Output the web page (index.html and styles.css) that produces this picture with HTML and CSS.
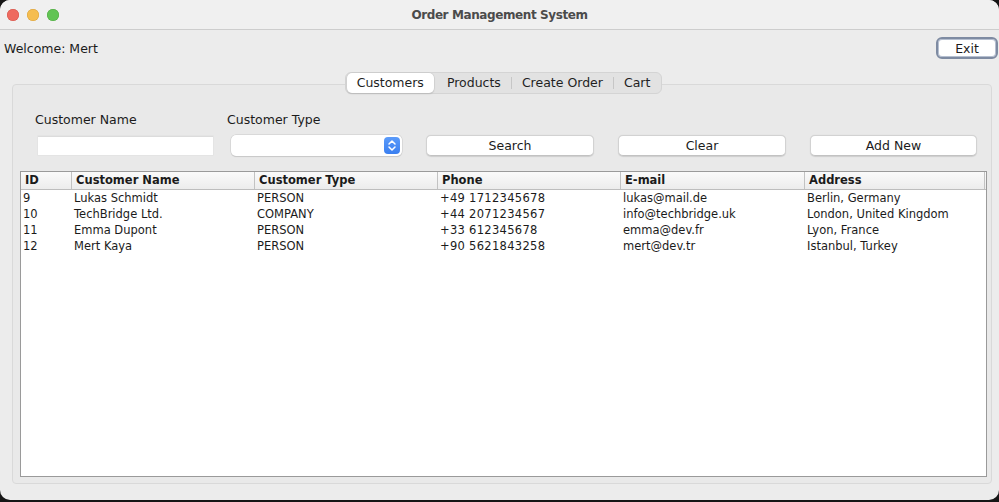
FILE: index.html
```html
<!DOCTYPE html>
<html>
<head>
<meta charset="utf-8">
<link rel="stylesheet" href="styles.css">
</head>
<body>
<div class="window">
  <div class="titlebar">
    <div class="lights">
      <span class="light red"></span>
      <span class="light yellow"></span>
      <span class="light green"></span>
    </div>
    <div class="title">Order Management System</div>
  </div>
  <div class="content">
    <div class="toprow">
      <span class="welcome">Welcome: Mert</span>
      <button class="btn exit">Exit</button>
    </div>
    <div class="tabs">
      <div class="seg">
        <span class="tab active">Customers</span>
        <span class="tab">Products</span>
        <span class="sep"></span>
        <span class="tab">Create Order</span>
        <span class="sep"></span>
        <span class="tab">Cart</span>
      </div>
    </div>
    <div class="panel">
      <div class="labels">
        <span class="lbl lbl-name">Customer Name</span>
        <span class="lbl">Customer Type</span>
      </div>
      <div class="controls">
        <div class="field"></div>
        <div class="combo">
          <span class="stepper">
            <svg width="16" height="17" viewBox="0 0 16 17"><path d="M5 7 L8 4 L11 7" fill="none" stroke="#fff" stroke-width="1.5" stroke-linecap="round" stroke-linejoin="round"/><path d="M5 10 L8 13 L11 10" fill="none" stroke="#fff" stroke-width="1.5" stroke-linecap="round" stroke-linejoin="round"/></svg>
          </span>
        </div>
        <button class="btn act b-search">Search</button>
        <button class="btn act b-clear">Clear</button>
        <button class="btn act b-add">Add New</button>
      </div>
      <div class="table">
        <div class="thead">
          <div class="th">ID</div>
          <div class="th">Customer Name</div>
          <div class="th">Customer Type</div>
          <div class="th">Phone</div>
          <div class="th">E-mail</div>
          <div class="th">Address</div>
        </div>
        <div class="tr">
          <div class="td">9</div><div class="td">Lukas Schmidt</div><div class="td">PERSON</div><div class="td num">+49 1712345678</div><div class="td">lukas@mail.de</div><div class="td">Berlin, Germany</div>
        </div>
        <div class="tr">
          <div class="td">10</div><div class="td">TechBridge Ltd.</div><div class="td">COMPANY</div><div class="td num">+44 2071234567</div><div class="td">info@techbridge.uk</div><div class="td">London, United Kingdom</div>
        </div>
        <div class="tr">
          <div class="td">11</div><div class="td">Emma Dupont</div><div class="td">PERSON</div><div class="td num">+33 612345678</div><div class="td">emma@dev.fr</div><div class="td">Lyon, France</div>
        </div>
        <div class="tr">
          <div class="td">12</div><div class="td">Mert Kaya</div><div class="td">PERSON</div><div class="td num">+90 5621843258</div><div class="td">mert@dev.tr</div><div class="td">Istanbul, Turkey</div>
        </div>
      </div>
    </div>
  </div>
</div>
</body>
</html>
```
FILE: styles.css
```css
* { box-sizing: border-box; }
html, body { margin: 0; padding: 0; }
body {
  background: #151515;
  width: 999px;
  height: 502px;
  overflow: hidden;
  font-family: "DejaVu Sans", "Noto Sans", sans-serif;
  color: #1b1b1b;
}
.window {
  width: 999px;
  height: 500px;
  background: #ececec;
  border-radius: 10px;
  overflow: hidden;
  display: flex;
  flex-direction: column;
}
.titlebar {
  height: 30px;
  flex: none;
  background: #f0f0f0;
  border-bottom: 1px solid #cdcdcd;
  display: flex;
  align-items: center;
  position: relative;
}
.lights {
  display: flex;
  gap: 8px;
  padding-left: 7px;
  position: absolute;
  left: 0;
  top: 9px;
}
.light {
  width: 12px;
  height: 12px;
  border-radius: 50%;
  display: block;
}
.red { background: #ee6a5f; box-shadow: inset 0 0 0 0.5px #d2544a; }
.yellow { background: #f5bd4f; box-shadow: inset 0 0 0 0.5px #d8a03b; }
.green { background: #61c454; box-shadow: inset 0 0 0 0.5px #4ea73f; }
.title {
  flex: 1;
  text-align: center;
  font-size: 12px;
  letter-spacing: -0.4px;
  font-weight: bold;
  color: #4b4b4b;
  padding-top: 1px;
}
.content {
  flex: 1;
  display: flex;
  flex-direction: column;
}
.toprow {
  display: flex;
  justify-content: space-between;
  align-items: center;
  padding: 7px 1px 0 4px;
  height: 29px;
}
.welcome { font-size: 12.5px; }
.btn {
  font-family: "DejaVu Sans", sans-serif;
  font-size: 12.5px;
  color: #1b1b1b;
  background: #fff;
  border: 1px solid #d2d2d2;
  border-bottom-color: #c2c2c2;
  border-radius: 5px;
  padding: 0;
  box-shadow: 0 0.5px 1px rgba(0,0,0,0.12);
}
.exit {
  width: 62px;
  height: 22px;
  border: 2px solid #7e8ba2;
  border-radius: 6px;
  box-shadow: 0 0 0 1px #b5bfd0 inset;
}
.tabs {
  display: flex;
  justify-content: center;
  padding-top: 13px;
  padding-left: 8px;
  position: relative;
  z-index: 1;
  margin-bottom: -10px;
}
.seg {
  display: flex;
  align-items: center;
  height: 22px;
  background: #e2e2e2;
  border: 1px solid #d4d4d4;
  border-radius: 6px;
  padding: 0 1px;
}
.tab {
  font-size: 12.5px;
  padding: 0 10px;
  height: 20px;
  line-height: 19px;
  color: #1f1f1f;
}
.tab.active {
  background: #fff;
  border-radius: 5px;
  box-shadow: 0 0 0 0.5px #c8c8c8, 0 1px 1.5px rgba(0,0,0,0.18);
  padding: 0 10px;
  margin-right: 3px;
}
.sep {
  width: 1px;
  height: 12px;
  background: #c6c6c6;
  display: block;
}
.panel {
  margin: 0 7px 16px 12px;
  flex: 1;
  border: 1px solid #d9d9d9;
  border-radius: 4px;
  background: #e9e9e9;
  padding: 27px 2px 6px 7px;
  display: flex;
  flex-direction: column;
}
.labels {
  display: flex;
  padding-left: 15px;
  font-size: 12.5px;
  height: 16px;
  line-height: 16px;
}
.lbl-name { width: 192px; }
.controls {
  display: flex;
  align-items: center;
  padding-left: 18px;
  margin-top: 6px;
  height: 22px;
}
.field {
  width: 175px;
  height: 19px;
  background: #fff;
  border-top: 1px solid #dcdcdc;
  box-shadow: 0 0 0 0.5px #e0e0e0;
}
.combo {
  margin-left: 18px;
  width: 171px;
  height: 21px;
  background: #fff;
  border-radius: 5px;
  box-shadow: 0 0 0 0.5px #c9c9c9, 0 1px 1px rgba(0,0,0,0.15);
  display: flex;
  justify-content: flex-end;
  align-items: center;
  padding-right: 2px;
}
.stepper {
  width: 16px;
  height: 17px;
  border-radius: 4px;
  background: linear-gradient(#5b9bfa, #3a7ff0);
  display: block;
}
.stepper svg { display: block; }
.act {
  height: 21px;
  width: 168px;
  margin-left: 24px;
}
.b-add { width: 167px; }
.table {
  margin-top: 15px;
  margin-right: 2px;
  flex: 1;
  background: #fff;
  border: 1px solid #9a9a9a;
  font-size: 11.5px;
}
.thead, .tr {
  display: grid;
  grid-template-columns: 50px 183px 183px 183px 184px 1fr;
}
.thead {
  height: 18px;
  background: linear-gradient(#fafafa, #ececec);
  border-bottom: 1px solid #bdbdbd;
}
.th {
  font-weight: bold;
  font-size: 11.5px;
  line-height: 17px;
  padding-left: 4px;
  border-left: 1px solid #c2c2c2;
}
.th:first-child { border-left: none; padding-left: 4px; }
.th:last-child { border-right: 1px solid #c2c2c2; margin-right: 1px; }
.tr { height: 16px; line-height: 16px; }
.td { padding-left: 3px; white-space: nowrap; }
.td:first-child { padding-left: 2px; }
.num { letter-spacing: 0.3px; }
```
